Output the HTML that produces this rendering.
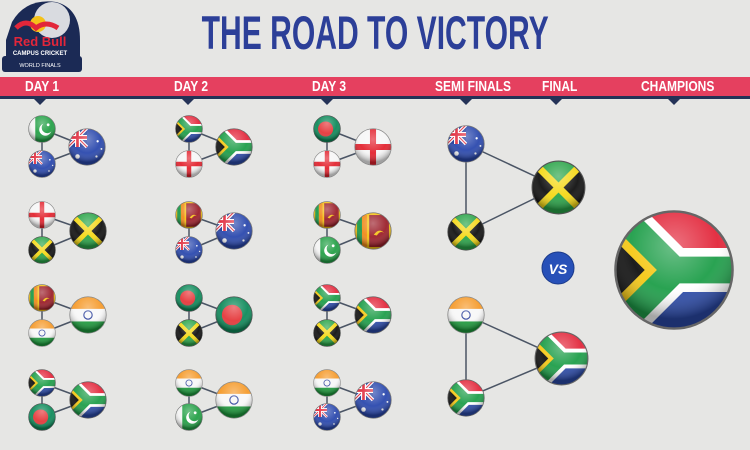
<!DOCTYPE html>
<html><head><meta charset="utf-8"><style>
html,body{margin:0;padding:0}
body{width:750px;height:450px;overflow:hidden;background:#e6e6e4;position:relative;font-family:"Liberation Sans Narrow","Liberation Sans",sans-serif}
.title{position:absolute;left:0;width:750px;top:5px;text-align:center;color:#2c3f98;font-size:47px;font-weight:bold;}
.title span{display:inline-block;transform:scaleX(.64);transform-origin:center;margin-left:0px}
.bar{position:absolute;left:0;top:77px;width:750px;height:19px;background:#e5405f;border-bottom:3px solid #243257}
.lbl{position:absolute;top:78px;color:#fff;font-weight:bold;font-size:15px;transform:scaleX(.8);transform-origin:left;white-space:nowrap}
.ptr{position:absolute;top:99px;width:0;height:0;border-left:6px solid transparent;border-right:6px solid transparent;border-top:6px solid #243257}
</style></head><body>
<div class="title"><span>THE ROAD TO VICTORY</span></div>
<div class="bar"></div>
<div class="lbl" style="left:25px">DAY 1</div>
<div class="lbl" style="left:174px">DAY 2</div>
<div class="lbl" style="left:312px">DAY 3</div>
<div class="lbl" style="left:435px">SEMI FINALS</div>
<div class="lbl" style="left:542px">FINAL</div>
<div class="lbl" style="left:641px">CHAMPIONS</div>
<div class="ptr" style="left:34px"></div><div class="ptr" style="left:182px"></div><div class="ptr" style="left:321px"></div>
<div class="ptr" style="left:460px"></div><div class="ptr" style="left:550px"></div><div class="ptr" style="left:668px"></div>

<svg width="750" height="450" style="position:absolute;left:0;top:0" xmlns="http://www.w3.org/2000/svg">
<defs>
<clipPath id="c"><circle cx="50" cy="50" r="48"/></clipPath>
<radialGradient id="gl" cx="50%" cy="30%" r="60%"><stop offset="0" stop-color="#fff" stop-opacity=".35"/><stop offset=".6" stop-color="#fff" stop-opacity=".05"/><stop offset="1" stop-color="#000" stop-opacity=".35"/></radialGradient>
<g id="uj"><rect width="50" height="50" fill="#1f3a9a"/><path d="M0 0L50 50M50 0L0 50" stroke="#fff" stroke-width="9"/><path d="M0 0L50 50M50 0L0 50" stroke="#e0283a" stroke-width="3"/><path d="M25 0V50M0 25H50" stroke="#fff" stroke-width="13"/><path d="M25 0V50M0 25H50" stroke="#e0283a" stroke-width="7"/></g>
<symbol id="au" viewBox="0 0 100 100"><g clip-path="url(#c)"><rect width="100" height="100" fill="#2a48ad"/><use href="#uj"/><circle cx="25" cy="75" r="6" fill="#fff"/><circle cx="78" cy="35" r="3" fill="#fff"/><circle cx="75" cy="75" r="3" fill="#fff"/><circle cx="88" cy="55" r="2.5" fill="#fff"/><rect width="100" height="100" fill="url(#gl)"/></g><circle cx="50" cy="50" r="48" fill="none" stroke="#777" stroke-width="2"/></symbol>
<symbol id="pk" viewBox="0 0 100 100"><g clip-path="url(#c)"><rect width="100" height="100" fill="#23a046"/><rect width="26" height="100" fill="#f4f4f4"/><circle cx="62" cy="52" r="22" fill="#fff"/><circle cx="69" cy="45" r="20" fill="#23a046"/><circle cx="72" cy="35" r="5" fill="#fff"/><rect width="100" height="100" fill="url(#gl)"/></g><circle cx="50" cy="50" r="48" fill="none" stroke="#777" stroke-width="2"/></symbol>
<symbol id="en" viewBox="0 0 100 100"><g clip-path="url(#c)"><rect width="100" height="100" fill="#f6f6f6"/><path d="M50 0V100M0 50H100" stroke="#e3232e" stroke-width="16"/><rect width="100" height="100" fill="url(#gl)"/></g><circle cx="50" cy="50" r="48" fill="none" stroke="#888" stroke-width="2"/></symbol>
<symbol id="jm" viewBox="0 0 100 100"><g clip-path="url(#c)"><rect width="100" height="100" fill="#2aa448"/><path d="M0 0L50 50L0 100ZM100 0L50 50L100 100Z" fill="#111"/><path d="M0 0L100 100M100 0L0 100" stroke="#f5d816" stroke-width="13"/><rect width="100" height="100" fill="url(#gl)"/></g><circle cx="50" cy="50" r="48" fill="none" stroke="#555" stroke-width="2"/></symbol>
<symbol id="za" viewBox="0 0 100 100"><g clip-path="url(#c)"><rect width="100" height="50" fill="#e2263a"/><rect y="50" width="100" height="50" fill="#2b4aa8"/><path d="M0 0L50 50L0 100M50 50H100" stroke="#fff" stroke-width="36" fill="none"/><path d="M0 0L50 50L0 100M50 50H100" stroke="#1e9e49" stroke-width="22" fill="none"/><path d="M0 14L36 50L0 86Z" fill="#f5c815"/><path d="M0 24L26 50L0 76Z" fill="#111"/><rect width="100" height="100" fill="url(#gl)"/></g><circle cx="50" cy="50" r="48" fill="none" stroke="#666" stroke-width="2"/></symbol>
<symbol id="lk" viewBox="0 0 100 100"><g clip-path="url(#c)"><rect width="100" height="100" fill="#f5c212"/><rect x="8" y="8" width="13" height="84" fill="#1a9a4a"/><rect x="21" y="8" width="13" height="84" fill="#f08a1a"/><rect x="40" y="8" width="52" height="84" fill="#9b1f2a"/><path d="M52 60Q66 40 80 56Q70 46 60 62Z" fill="#f5c212"/><rect width="100" height="100" fill="url(#gl)"/></g><circle cx="50" cy="50" r="48" fill="none" stroke="#777" stroke-width="2"/></symbol>
<symbol id="bd" viewBox="0 0 100 100"><g clip-path="url(#c)"><rect width="100" height="100" fill="#0e8a5a"/><circle cx="45" cy="50" r="27" fill="#e5373a"/><rect width="100" height="100" fill="url(#gl)"/></g><circle cx="50" cy="50" r="48" fill="none" stroke="#555" stroke-width="2"/></symbol>
<symbol id="in" viewBox="0 0 100 100"><g clip-path="url(#c)"><rect width="100" height="34" fill="#f59a2a"/><rect y="34" width="100" height="33" fill="#f7f7f7"/><rect y="67" width="100" height="33" fill="#1d9a3c"/><circle cx="50" cy="50" r="11" fill="none" stroke="#2a3f9a" stroke-width="3"/><rect width="100" height="100" fill="url(#gl)"/></g><circle cx="50" cy="50" r="48" fill="none" stroke="#888" stroke-width="2"/></symbol>
</defs>

<!-- logo -->
<g>
<path d="M12 22Q26 -2 56 2Q80 8 80 40L80 64L6 64L6 40Z" fill="#1b2a55"/>
<rect x="2" y="56" width="80" height="16" rx="3" fill="#1b2a55"/>
<circle cx="52" cy="20" r="18" fill="#d9dbe0"/>
<circle cx="38" cy="24" r="8" fill="#f4c21a"/>
<path d="M16 28Q26 18 36 28Q46 20 58 28" stroke="#e2263a" stroke-width="5" fill="none"/>
<text x="40" y="46" text-anchor="middle" font-family="Liberation Sans" font-weight="bold" font-size="13" fill="#e2263a">Red Bull</text>
<text x="40" y="55" text-anchor="middle" font-family="Liberation Sans" font-weight="bold" font-size="6" fill="#fff">CAMPUS CRICKET</text>
<text x="40" y="67" text-anchor="middle" font-family="Liberation Sans" font-size="5.5" fill="#fff">WORLD FINALS</text>
</g>

<g stroke="#4b5565" stroke-width="1.5">
<path d="M42 129L87 147M42 164L87 147M42 129L42 164"/>
<path d="M42 215L88 231M42 250L88 231M42 215L42 250"/>
<path d="M42 298L88 315M42 333L88 315M42 298L42 333"/>
<path d="M42 383L88 400M42 417L88 400M42 383L42 417"/>
<path d="M189 129L234 147M189 164L234 147M189 129L189 164"/>
<path d="M189 215L234 231M189 250L234 231M189 215L189 250"/>
<path d="M189 298L234 315M189 333L234 315M189 298L189 333"/>
<path d="M189 383L234 400M189 417L234 400M189 383L189 417"/>
<path d="M327 129L373 147M327 164L373 147M327 129L327 164"/>
<path d="M327 215L373 231M327 250L373 231M327 215L327 250"/>
<path d="M327 298L373 315M327 333L373 315M327 298L327 333"/>
<path d="M327 383L373 400M327 417L373 400M327 383L327 417"/>
<path d="M466 144L558 187M466 232L558 187M466 144L466 232"/>
<path d="M466 315L561 358M466 398L561 358M466 315L466 398"/>
</g>

<use href="#pk" x="28" y="115" width="28" height="28"/><use href="#au" x="28" y="150" width="28" height="28"/><use href="#au" x="68" y="128" width="38" height="38"/>
<use href="#en" x="28" y="201" width="28" height="28"/><use href="#jm" x="28" y="236" width="28" height="28"/><use href="#jm" x="69" y="212" width="38" height="38"/>
<use href="#lk" x="28" y="284" width="28" height="28"/><use href="#in" x="28" y="319" width="28" height="28"/><use href="#in" x="69" y="296" width="38" height="38"/>
<use href="#za" x="28" y="369" width="28" height="28"/><use href="#bd" x="28" y="403" width="28" height="28"/><use href="#za" x="69" y="381" width="38" height="38"/>
<use href="#za" x="175" y="115" width="28" height="28"/><use href="#en" x="175" y="150" width="28" height="28"/><use href="#za" x="215" y="128" width="38" height="38"/>
<use href="#lk" x="175" y="201" width="28" height="28"/><use href="#au" x="175" y="236" width="28" height="28"/><use href="#au" x="215" y="212" width="38" height="38"/>
<use href="#bd" x="175" y="284" width="28" height="28"/><use href="#jm" x="175" y="319" width="28" height="28"/><use href="#bd" x="215" y="296" width="38" height="38"/>
<use href="#in" x="175" y="369" width="28" height="28"/><use href="#pk" x="175" y="403" width="28" height="28"/><use href="#in" x="215" y="381" width="38" height="38"/>
<use href="#bd" x="313" y="115" width="28" height="28"/><use href="#en" x="313" y="150" width="28" height="28"/><use href="#en" x="354" y="128" width="38" height="38"/>
<use href="#lk" x="313" y="201" width="28" height="28"/><use href="#pk" x="313" y="236" width="28" height="28"/><use href="#lk" x="354" y="212" width="38" height="38"/>
<use href="#za" x="313" y="284" width="28" height="28"/><use href="#jm" x="313" y="319" width="28" height="28"/><use href="#za" x="354" y="296" width="38" height="38"/>
<use href="#in" x="313" y="369" width="28" height="28"/><use href="#au" x="313" y="403" width="28" height="28"/><use href="#au" x="354" y="381" width="38" height="38"/>
<use href="#au" x="447" y="125" width="38" height="38"/><use href="#jm" x="447" y="213" width="38" height="38"/>
<use href="#in" x="447" y="296" width="38" height="38"/><use href="#za" x="447" y="379" width="38" height="38"/>
<use href="#jm" x="531" y="160" width="55" height="55"/><use href="#za" x="534" y="331" width="55" height="55"/>
<circle cx="558" cy="268" r="16" fill="#2750b8" stroke="#1b3a8a" stroke-width="1"/>
<text x="558" y="274" text-anchor="middle" font-family="Liberation Sans" font-weight="bold" font-style="italic" font-size="14" fill="#fff">VS</text>
<use href="#za" x="613" y="209" width="122" height="122"/>
</svg>
</body></html>
